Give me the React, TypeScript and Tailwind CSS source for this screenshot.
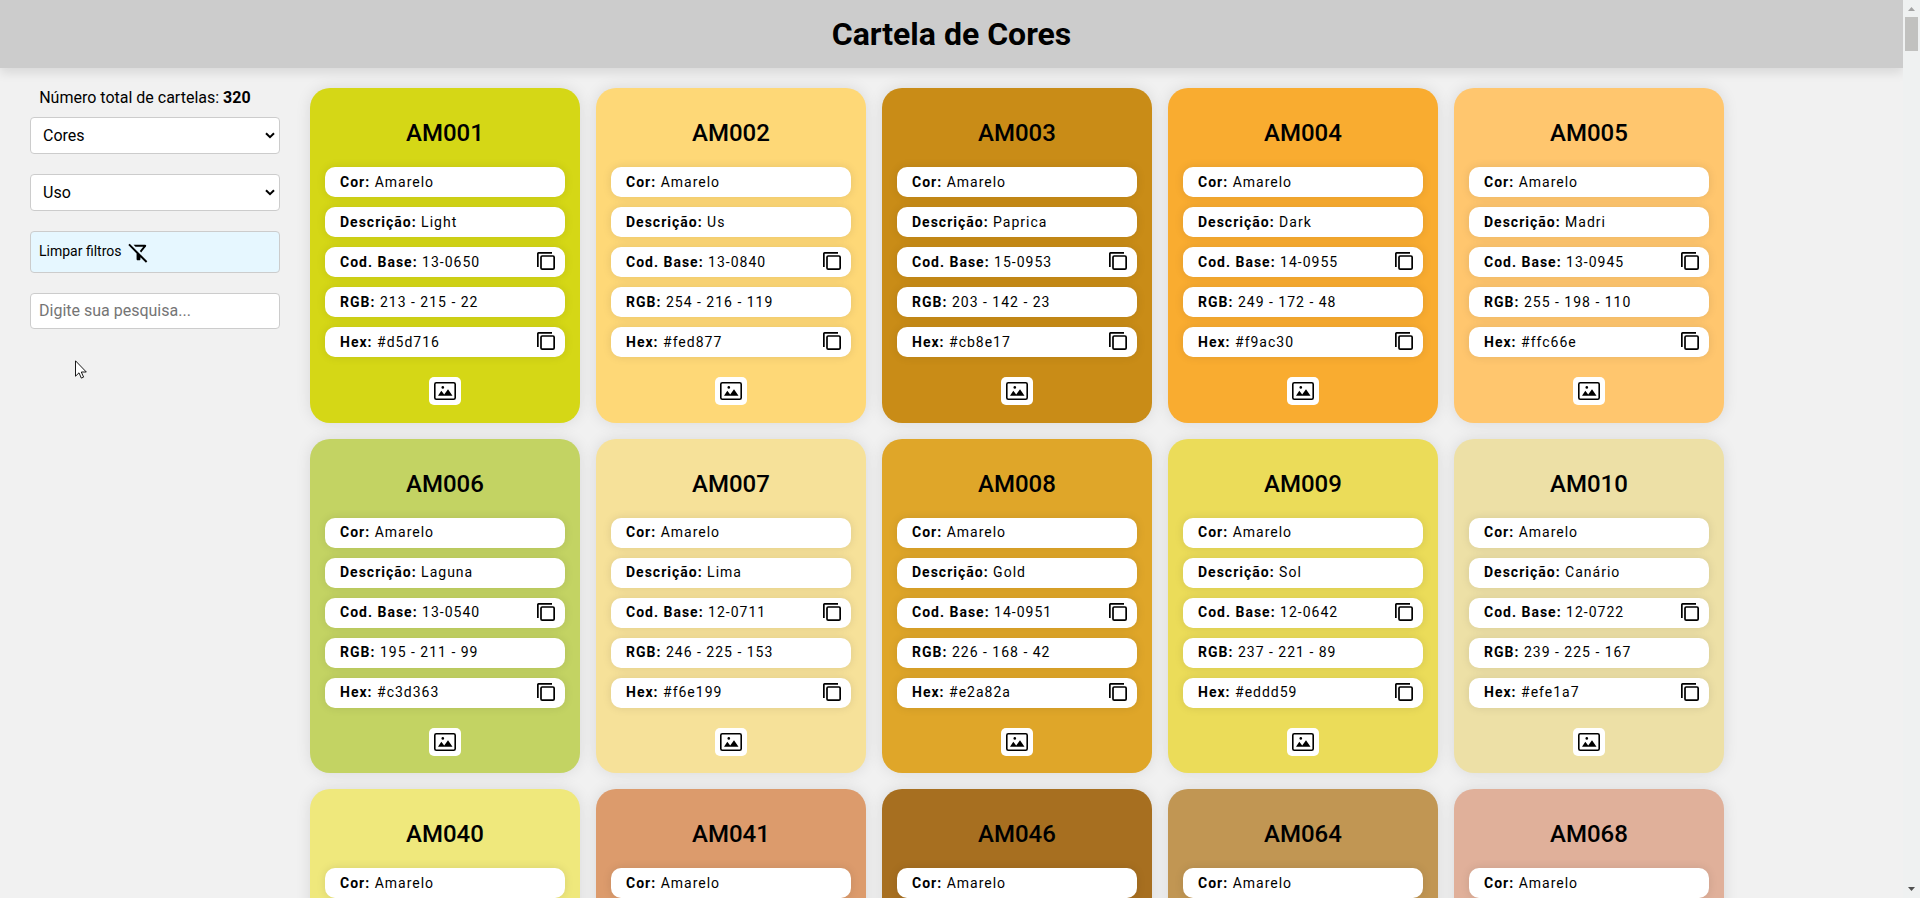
import { MdOutlineFilterAltOff } from "react-icons/md";

type Swatch = {
  id: string;
  bg: string;
  desc: string;
  base: string;
  rgb: string;
  hex: string;
};

const swatches: Swatch[] = [
  { id: "AM001", bg: "bg-[#d5d716]", desc: "Light", base: "13-0650", rgb: "213 - 215 - 22", hex: "#d5d716" },
  { id: "AM002", bg: "bg-[#fed877]", desc: "Us", base: "13-0840", rgb: "254 - 216 - 119", hex: "#fed877" },
  { id: "AM003", bg: "bg-[#c98c17]", desc: "Paprica", base: "15-0953", rgb: "203 - 142 - 23", hex: "#cb8e17" },
  { id: "AM004", bg: "bg-[#f9ac30]", desc: "Dark", base: "14-0955", rgb: "249 - 172 - 48", hex: "#f9ac30" },
  { id: "AM005", bg: "bg-[#ffc66e]", desc: "Madri", base: "13-0945", rgb: "255 - 198 - 110", hex: "#ffc66e" },
  { id: "AM006", bg: "bg-[#c3d363]", desc: "Laguna", base: "13-0540", rgb: "195 - 211 - 99", hex: "#c3d363" },
  { id: "AM007", bg: "bg-[#f6e199]", desc: "Lima", base: "12-0711", rgb: "246 - 225 - 153", hex: "#f6e199" },
  { id: "AM008", bg: "bg-[#dfa629]", desc: "Gold", base: "14-0951", rgb: "226 - 168 - 42", hex: "#e2a82a" },
  { id: "AM009", bg: "bg-[#ebdc59]", desc: "Sol", base: "12-0642", rgb: "237 - 221 - 89", hex: "#eddd59" },
  { id: "AM010", bg: "bg-[#ede0a6]", desc: "Canário", base: "12-0722", rgb: "239 - 225 - 167", hex: "#efe1a7" },
];

const lastRow = [
  { id: "AM040", bg: "bg-[#efe87c]" },
  { id: "AM041", bg: "bg-[#dc9b6c]" },
  { id: "AM046", bg: "bg-[#a76f20]" },
  { id: "AM064", bg: "bg-[#c19653]" },
  { id: "AM068", bg: "bg-[#e0b09a]" },
];

function CopyIcon() {
  return (
    <svg viewBox="0 0 18 18" className="mb-[1.6px] size-[18px]" fill="none" stroke="#000" strokeWidth="1.7">
      <path d="M.85 15V1.500Q.85.85 1.500.85H15" />
      <rect x="4" y="4" width="13.150" height="13.150" rx="1.200" />
    </svg>
  );
}

function Field({ label, value, copy }: { label: string; value: string; copy?: boolean }) {
  return (
    <div className="flex h-[30px] items-center justify-between rounded-[10px] bg-white pr-[10px] pl-[15px] text-sm tracking-[1px] shadow-[0_0_10px_rgba(0,0,0,0.1)]">
      <p className="pb-[0.5px]">
        <b className="font-bold">{label}:</b> {value}
      </p>
      {copy && <CopyIcon />}
    </div>
  );
}

function Card({ id, bg, details }: { id: string; bg: string; details?: Swatch }) {
  return (
    <article className={`flex h-[334.5px] flex-col rounded-[20px] px-[15px] shadow-[0_0_15px_rgba(0,0,0,0.1)] ${bg}`}>
      <h2 className="pt-[31px] text-center text-2xl leading-[29px] font-medium">{id}</h2>
      <div className="mt-[19px] flex flex-col gap-2.5">
        <Field label="Cor" value="Amarelo" />
        {details && (
          <>
            <Field label="Descrição" value={details.desc} />
            <Field label="Cod. Base" value={details.base} copy />
            <Field label="RGB" value={details.rgb} />
            <Field label="Hex" value={details.hex} copy />
          </>
        )}
      </div>
      {details && (
        <button className="mt-5 flex h-7 w-8 items-center justify-center self-center rounded-[5px] bg-white">
          <svg viewBox="0 0 22 18" className="h-[18px] w-[22px]">
            <rect x=".8" y=".8" width="20.400" height="16.400" rx="1.500" fill="none" stroke="#000" strokeWidth="1.600" />
            <path d="M4 13.700l3.300-5 2.900 3.700L14 7.300l4.500 6.400z" />
            <circle cx="8.800" cy="5.400" r="1.300" />
          </svg>
        </button>
      )}
    </article>
  );
}

function Select({ label }: { label: string }) {
  return (
    <div className="flex h-[37px] items-center justify-between rounded-[4px] border border-[#ccc] bg-white pr-1 pl-3 text-base">
      <span>{label}</span>
      <svg viewBox="0 0 10 7" className="h-[7px] w-[10px]">
        <path d="M1 1.200l4 4 4-4" fill="none" stroke="#000" strokeWidth="2" />
      </svg>
    </div>
  );
}

function Scrollbar() {
  return (
    <div className="z-20 flex w-[17px] flex-col items-center bg-[#eff1f1]">
      <svg viewBox="0 0 7 4" className="mt-[7px] h-1 w-[7px]">
        <path d="M0 4L3.500 0 7 4z" fill="#a3a3a3" />
      </svg>
      <div className="mt-1.5 h-[34px] w-[13px] bg-[#c1c1bf]" />
      <svg viewBox="0 0 7 4" className="mt-auto mb-[7px] h-1 w-[7px]">
        <path d="M0 0h7L3.500 4z" fill="#505050" />
      </svg>
    </div>
  );
}

export default function App() {
  return (
    <div className="relative flex h-[898px] overflow-hidden bg-[#f1f1f1] font-[Roboto,sans-serif] text-black">
      <div className="flex w-[1903px] flex-col">
        <header className="z-10 flex h-[68px] shrink-0 items-center justify-center bg-[#ccc] shadow-[0_5px_10px_rgba(0,0,0,0.1)]">
          <h1 className="text-[32px] leading-none font-bold">Cartela de Cores</h1>
        </header>
        <main className="flex min-h-0 flex-1 pt-5">
          <aside className="ml-[30px] w-[250px] shrink-0">
            <p className="pl-[9.2px] text-base leading-[19px]">
              Número total de cartelas: <b className="font-bold">320</b>
            </p>
            <div className="mt-[10px] flex flex-col gap-5">
              <Select label="Cores" />
              <Select label="Uso" />
              <button className="flex h-[42px] items-center gap-1.5 rounded-[4px] border border-[#ccc] bg-[#e6f7ff] pl-2 text-sm">
                <span className="pb-0.5">Limpar filtros</span>
                <MdOutlineFilterAltOff className="size-[23px]" />
              </button>
              <input
                className="h-9 rounded-[4px] border border-[#ccc] bg-white px-2 pb-0.5 text-base placeholder:text-[#757575]"
                placeholder="Digite sua pesquisa..."
              />
            </div>
          </aside>
          <section className="ml-[30px] grid w-[1414px] shrink-0 grid-cols-5 content-start gap-4">
            {swatches.map((s) => (
              <Card key={s.id} id={s.id} bg={s.bg} details={s} />
            ))}
            {lastRow.map((s) => (
              <Card key={s.id} id={s.id} bg={s.bg} />
            ))}
          </section>
        </main>
      </div>
      <Scrollbar />
      <svg viewBox="0 0 12 19" className="absolute top-[360px] left-[75px] z-30 h-[19px] w-3">
        <path d="M.5.8v15.400l3.500-3.400 2.300 5.300 2.300-1-2.300-5.100h5z" fill="#fff" stroke="#000" strokeWidth=".9" />
      </svg>
    </div>
  );
}
